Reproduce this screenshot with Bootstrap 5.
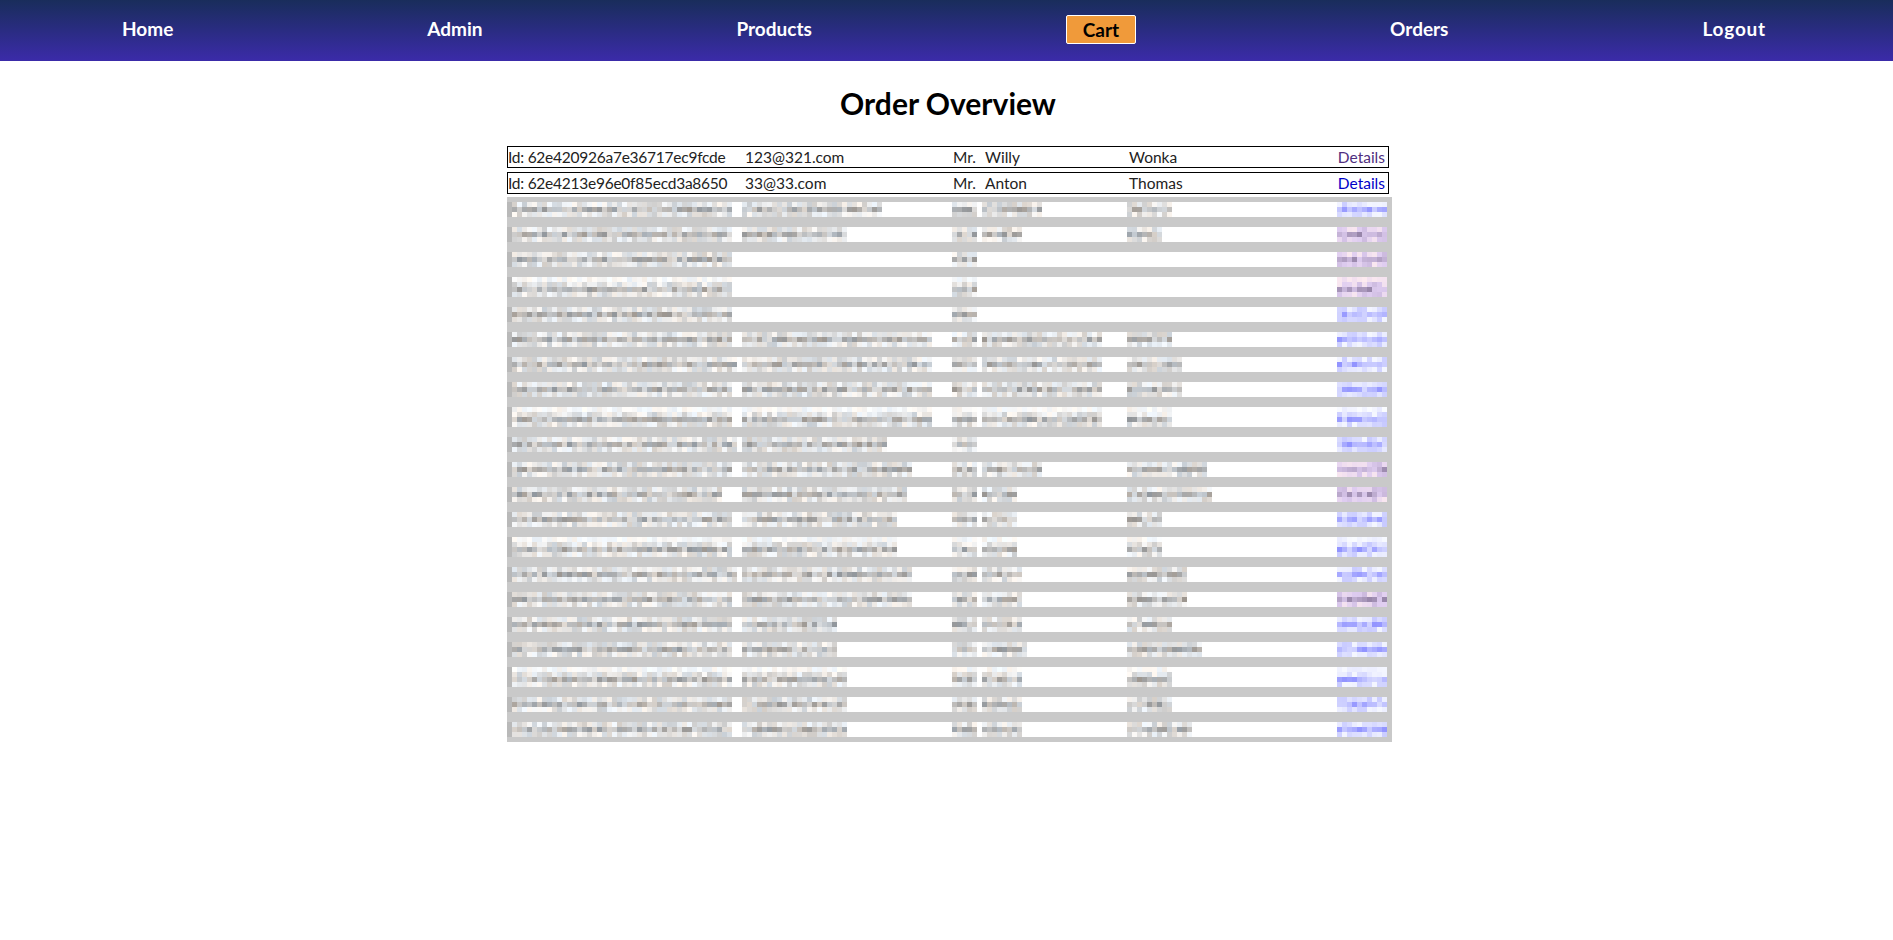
<!DOCTYPE html>
<html lang="en">
<head>
    <meta charset="UTF-8">
    <meta name="viewport" content="width=device-width, initial-scale=1.0">
    <title>Order Overview</title>
    <link href="https://cdn.jsdelivr.net/npm/bootstrap@5.3.0/dist/css/bootstrap.min.css" rel="stylesheet">
    <style>
        body {
            font-family: "Lato", "Liberation Sans", sans-serif;
            background: #fff;
            color: #222;
        }
        .top-menu {
            height: 61px;
            padding: 0 127px 3px 122px;
            background: linear-gradient(to bottom, #192d5b, #3b2ba9);
        }
        .top-menu a {
            color: #fff;
            font-size: 19px;
            font-weight: 700;
            text-decoration: none;
        }
        .top-menu a.menu-last {
            letter-spacing: 0.8px;
        }
        .top-menu a.menu-active {
            color: #000;
            background: #f09a3a;
            border: 1px solid #fff;
            border-radius: 2px;
            padding: 1px 16px;
            line-height: 25px;
        }
        .page-body {
            padding-left: 3px;
        }
        .page-title {
            font-size: 30px;
            font-weight: 700;
            color: #000;
            line-height: 40px;
            margin: 22px 0 23px;
        }
        .order-list {
            width: 882px;
            margin: 0 auto;
        }
        .order-row {
            height: 22px;
            line-height: 20px;
            font-size: 15.5px;
            border: 1px solid #000;
            margin-bottom: 4px;
        }
        .cell-id { width: 237px; letter-spacing: -0.25px; white-space: nowrap; }
        .cell-mail { width: 208px; }
        .cell-title { width: 32px; }
        .cell-name { width: 144px; }
        .order-row a { color: #0000c8; text-decoration: none; padding-right: 3px; }
        .order-row a.seen { color: #50307f; }
        #maskedRows {
            display: block;
            margin-top: -1px;
        }
    </style>
</head>
<body>
    <nav class="top-menu d-flex align-items-center justify-content-between">
        <a href="#">Home</a>
        <a href="#">Admin</a>
        <a href="#">Products</a>
        <a href="#" class="menu-active">Cart</a>
        <a href="#">Orders</a>
        <a href="#" class="menu-last">Logout</a>
    </nav>

    <main class="page-body">
        <h1 class="page-title text-center">Order Overview</h1>
        <div class="order-list">
            <div class="order-row d-flex">
                <div class="cell-id">Id: 62e420926a7e36717ec9fcde</div>
                <div class="cell-mail">123@321.com</div>
                <div class="cell-title">Mr.</div>
                <div class="cell-name">Willy</div>
                <div class="flex-grow-1">Wonka</div>
                <a href="#" class="seen">Details</a>
            </div>
            <div class="order-row d-flex">
                <div class="cell-id">Id: 62e4213e96e0f85ecd3a8650</div>
                <div class="cell-mail">33@33.com</div>
                <div class="cell-title">Mr.</div>
                <div class="cell-name">Anton</div>
                <div class="flex-grow-1">Thomas</div>
                <a href="#">Details</a>
            </div>
            <svg id="maskedRows" width="885" height="545" viewBox="0 0 885 545" aria-hidden="true"></svg>
        </div>
    </main>

    <script src="https://cdn.jsdelivr.net/npm/bootstrap@5.3.0/dist/js/bootstrap.bundle.min.js"></script>
    <script>
        // The remaining orders are pixelated in the picture: 5px blocks, id end, mail end, first name end, last name end, details tint
        const masked = [
            [730, 881, 1038, 1171, 'b'], [728, 845, 1018, 1161, 'p'], [730, 0, 0, 0, 'p'], [730, 0, 0, 0, 'p'],
            [730, 0, 0, 0, 'b'], [730, 932, 1101, 1171, 'b'], [736, 932, 1101, 1181, 'b'], [730, 932, 1101, 1181, 'b'],
            [730, 932, 1101, 1171, 'b'], [733, 886, 0, 0, 'b'], [728, 911, 1038, 1205, 'p'], [721, 903, 1014, 1212, 'p'],
            [730, 897, 1016, 1161, 'b'], [730, 897, 1016, 1161, 'b'], [733, 911, 1022, 1183, 'b'], [730, 911, 1022, 1183, 'p'],
            [730, 835, 1020, 1171, 'b'], [730, 835, 1026, 1202, 'b'], [728, 845, 1018, 1171, 'b'], [728, 845, 1018, 1171, 'b'],
            [728, 845, 1020, 1189, 'b']
        ];

        const ORIGIN_X = 507, ORIGIN_Y = 197, BLOCK = 5;
        let seed = 12345;
        function rnd() {
            seed = (seed * 16807) % 2147483647;
            return seed / 2147483647;
        }

        function rect(x, y, w, h, color) {
            return `<rect x="${x}" y="${y}" width="${w}" height="${h}" fill="${color}"/>`;
        }

        // Gray level per line of the text band: light on top, darker in the middle
        const LINE_RANGES = [[205, 250], [150, 220], [205, 250], [238, 255]];

        function textBlock(line, tint) {
            const range = LINE_RANGES[line];
            const g = Math.round(range[0] + rnd() * (range[1] - range[0]));
            if (tint === 'b') return `rgb(${g - 5},${g - 3},255)`;
            if (tint === 'p') return `rgb(${g},${g - 18},${Math.min(g + 18, 240)})`;
            const t = Math.round(rnd() * 14 - 7);
            return `rgb(${g + t},${g},${g - t})`;
        }

        function fillLine(xStart, xEnd, top, line, tint) {
            let out = '';
            const from = Math.floor((xStart - ORIGIN_X) / BLOCK) * BLOCK;
            const to = Math.ceil((xEnd - ORIGIN_X) / BLOCK) * BLOCK;
            for (let x = from; x < to; x += BLOCK) {
                out += rect(x, top, BLOCK, BLOCK, textBlock(line, tint));
            }
            return out;
        }

        function fillBlocks(xStart, xEnd, top, tall, tint) {
            let out = '';
            if (tall) out += fillLine(xStart, xEnd, top - BLOCK, 3, tint);
            for (let line = 0; line < 3; line++) {
                out += fillLine(xStart, xEnd, top + line * BLOCK, line, tint);
            }
            return out;
        }

        let svg = rect(0, 0, 885, 545, '#c9c9c9');
        masked.forEach((row, i) => {
            const rowTop = 198 + i * 26;
            // white band: the blocks that lie fully inside the row
            const first = Math.ceil((rowTop + 1 - ORIGIN_Y) / BLOCK) * BLOCK;
            const last = Math.floor((rowTop + 21 - ORIGIN_Y) / BLOCK) * BLOCK;
            const textTop = last - 3 * BLOCK;
            const tall = last - first > 15;
            svg += rect(5, first, 875, last - first, '#fff');
            svg += rect(0, first, 5, last - first, '#b9b9b9');
            svg += fillBlocks(512, row[0], textTop, tall);
            if (row[1]) svg += fillBlocks(745, row[1], textTop, tall);
            svg += fillBlocks(952, 977, textTop, tall);
            if (row[2]) svg += fillBlocks(985, row[2], textTop, tall);
            if (row[3]) svg += fillBlocks(1129, row[3], textTop, tall);
            svg += fillBlocks(1337, 1387, textTop, tall, row[4]);
        });
        document.getElementById('maskedRows').innerHTML = svg;
    </script>
</body>
</html>
